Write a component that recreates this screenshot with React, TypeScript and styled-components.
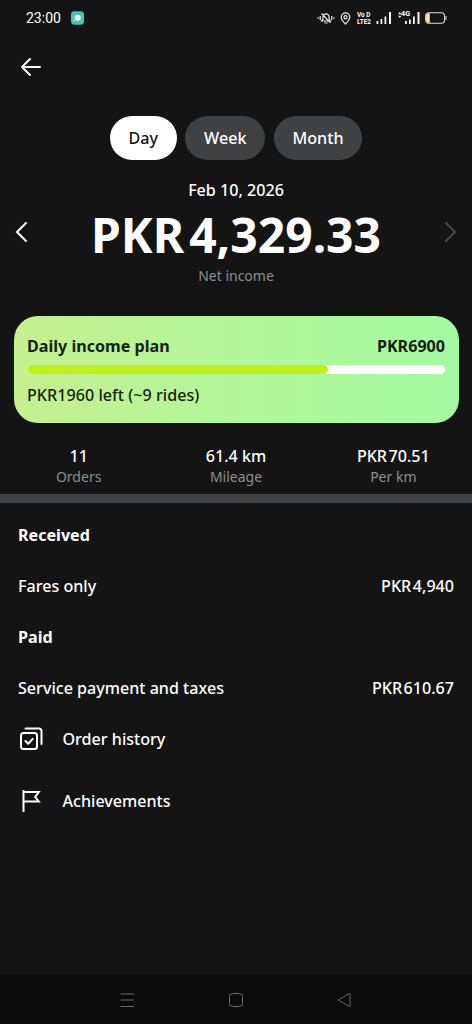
import React from "react";
import styled, { createGlobalStyle } from "styled-components";

const GlobalStyle = createGlobalStyle`
  * { box-sizing: border-box; }
  body { margin: 0; background: #141414; }
  svg { display: block; flex: none; }
`;

const Screen = styled.div`
  width: 472px;
  height: 1024px;
  display: flex;
  flex-direction: column;
  overflow: hidden;
  background: #141414;
  color: #fff;
  font-family: "Noto Sans", sans-serif;
  font-size: 16.1px;
  font-weight: 500;
`;

const StatusBar = styled.header`
  height: 36px;
  flex: none;
  display: flex;
  align-items: center;
  justify-content: space-between;
  padding: 0 25px 0 26px;
`;

const StatusGroup = styled.div<{ $gap: number }>`
  display: flex;
  align-items: center;
  gap: ${(p) => p.$gap}px;
`;

const Clock = styled.span`
  width: 35px;
  font-family: Roboto, sans-serif;
  font-size: 14px;
  font-weight: 400;
  line-height: 18px;
  white-space: nowrap;
`;

const VoLte = styled.span`
  width: 14px;
  display: flex;
  flex-direction: column;
  font: 700 7.5px/7px "Roboto", sans-serif;
  white-space: nowrap;
  transform: scaleX(0.85);
  transform-origin: left;

  span {
    height: 7px;
    overflow: hidden;
    width: 18px;
  }
`;

const Signal = styled.span`
  display: flex;
  position: relative;
`;

const NetworkTag = styled.span`
  position: absolute;
  left: 3px;
  top: -2px;
  font: 700 8px/8px "Roboto", sans-serif;
  transform: scaleX(0.9);
  transform-origin: left;
`;

const TopBar = styled.div`
  height: 79.5px;
  flex: none;
  padding: 19px 0 0 19px;
`;

const Tabs = styled.nav`
  display: flex;
  justify-content: center;
  gap: 8.5px;
`;

const Tab = styled.button<{ $active?: boolean; $width: number }>`
  width: ${(p) => p.$width}px;
  height: 44.5px;
  padding: 0;
  border: 0;
  border-radius: 23px;
  background: ${(p) => (p.$active ? "#fff" : "#404143")};
  color: ${(p) => (p.$active ? "#141414" : "#fff")};
  font: inherit;
  line-height: 45px;
`;

const Summary = styled.section`
  height: 156.3px;
  flex: none;
  display: flex;
  justify-content: space-between;
  padding: 18px 14px 0;
`;

const Step = styled.button`
  width: 16px;
  height: 24px;
  margin-top: 42px;
  padding: 0;
  border: 0;
  background: none;
  color: inherit;
`;

const SummaryText = styled.div`
  display: flex;
  flex-direction: column;
  align-items: center;
`;

const DateLabel = styled.div`
  line-height: 24px;
`;

const Total = styled.div`
  height: 64px;
  font-size: 48px;
  font-weight: 700;
  line-height: 66px;
  white-space: nowrap;
`;

const Currency = styled.span<{ $gap?: number }>`
  margin-right: ${(p) => p.$gap ?? 1.5}px;
`;

const Caption = styled.div`
  color: #8e8f91;
  font-size: 14px;
  font-weight: 400;
  line-height: 20px;
`;

const Plan = styled.section`
  height: 106.7px;
  flex: none;
  margin: 0 13.5px;
  padding: 17.7px 13.5px 0;
  border-radius: 24px;
  background: linear-gradient(90deg, #c5f08f, #b2f69a 50%, #a4faa1);
  color: #141f10;
`;

const PlanHead = styled.div`
  display: flex;
  justify-content: space-between;
  font-weight: 700;
  line-height: 25px;
`;

const Track = styled.div`
  height: 9px;
  margin-top: 6.3px;
  border-radius: 5px;
  background: #fff;
  overflow: hidden;
`;

const Fill = styled.div`
  height: 100%;
  border-radius: 5px;
  background: #c1f11d;
`;

const PlanNote = styled.div`
  margin-top: 8.7px;
  line-height: 25px;
  letter-spacing: 0.03px;
`;

const Stats = styled.section`
  height: 71px;
  flex: none;
  display: grid;
  grid-template-columns: repeat(3, 1fr);
  padding-top: 22px;
  text-align: center;
`;

const StatValue = styled.div`
  height: 22px;
  line-height: 23px;
`;

const Divider = styled.hr`
  width: 100%;
  height: 9px;
  flex: none;
  margin: 0 0 6.5px;
  border: 0;
  background: #404143;
`;

const Row = styled.div<{ $bold?: boolean }>`
  height: 51px;
  flex: none;
  display: flex;
  align-items: center;
  justify-content: space-between;
  padding: 0 18px;
  font-weight: ${(p) => (p.$bold ? 700 : 500)};
`;

const Links = styled.nav`
  display: flex;
  flex-direction: column;
  gap: 11px;
`;

const Link = styled.a`
  height: 51px;
  flex: none;
  display: flex;
  align-items: center;
  gap: 18.5px;
  padding-left: 18px;
`;

const Spacer = styled.div`
  flex: 1;
`;

const NavBar = styled.footer`
  height: 49px;
  flex: none;
  display: flex;
  justify-content: space-between;
  align-items: center;
  padding: 0 120px 0 119px;
  background: #0b0b0b;
`;

const SignalBars = () => (
  <svg width="16" height="12" viewBox="0 0 16 12" fill="#f4f4f4">
    <rect x="0.5" y="9" width="1.8" height="3" />
    <rect x="4.5" y="7" width="1.8" height="5" />
    <rect x="8.5" y="4.5" width="1.8" height="7.5" />
    <rect x="13" y="0" width="2" height="12" />
  </svg>
);

const Chevron = ({ flip, color }: { flip?: boolean; color: string }) => (
  <svg width="16" height="24" viewBox="0 0 16 24" fill="none" stroke={color} strokeWidth="2" strokeLinecap="round">
    <path d={flip ? "M4 3l9 9-9 9" : "M12 3L3 12l9 9"} />
  </svg>
);

const stats = [
  { value: "11", label: "Orders" },
  { value: "61.4 km", label: "Mileage" },
  { value: <><Currency>PKR</Currency>70.51</>, label: "Per km" },
];

export default function App() {
  return (
    <Screen>
      <GlobalStyle />
      <StatusBar>
        <StatusGroup $gap={10}>
          <Clock>23:00</Clock>
          <svg width="13" height="14" viewBox="0 0 13 14">
            <rect width="13" height="13.5" y=".2" rx="3.4" fill="#45c5b5" />
            <circle cx="6.7" cy="6.7" r="3" fill="#fff" />
            <circle cx="6.7" cy="6.7" r=".8" fill="#9de0d9" />
            <circle cx="3.1" cy="9.6" r=".7" fill="#fff" />
          </svg>
        </StatusGroup>
        <StatusGroup $gap={5.5}>
          <svg width="18" height="14" viewBox="0 0 18 14" fill="none" stroke="#eee" strokeWidth="1.2">
            <path d="M4.5 10h9L12 8V5.8a3 3 0 0 0-6 0V8zM7.5 12h3M4.6 2.5l8.8 9.3M3.2 5v4M14.8 5v4M1 6.2v1.6M17 6.2v1.6" />
          </svg>
          <svg width="11" height="13" viewBox="0 0 11 13" fill="none" stroke="#eee" strokeWidth="1.2">
            <path d="M5.5 12C3 9.5 1.2 7.5 1.2 5.2a4.3 4.3 0 0 1 8.6 0c0 2.3-1.8 4.3-4.3 6.8z" />
            <circle cx="5.5" cy="5.2" r="1.6" />
          </svg>
          <VoLte><span>Vo D</span><span>LTE2</span></VoLte>
          <SignalBars />
          <Signal>
            <svg width="22" height="12" viewBox="0 0 22 12" fill="#f4f4f4">
              <path d="M0 2.3L1.8 0l1.8 2.3zM0 3.8l1.8 2.3 1.8-2.3z" />
              <rect x="7" y="9" width="1.8" height="3" />
              <rect x="11" y="7.5" width="1.8" height="4.5" />
              <rect x="15" y="4.5" width="1.8" height="7.5" />
              <rect x="19.5" y="0" width="2" height="12" />
            </svg>
            <NetworkTag>4G</NetworkTag>
          </Signal>
          <svg width="22" height="12" viewBox="0 0 22 12">
            <rect x=".6" y=".7" width="19" height="10.6" rx="3.5" fill="none" stroke="#ddd" strokeWidth="1.1" />
            <path d="M3.4 1.2h1.4v9.6H3.4a2.3 2.3 0 0 1-2.3-2.3v-5a2.3 2.3 0 0 1 2.3-2.3z" fill="#ffe0a0" />
            <path d="M21 4v4" stroke="#ddd" />
          </svg>
        </StatusGroup>
      </StatusBar>

      <TopBar>
        <svg width="24" height="24" viewBox="0 0 24 24" fill="none" stroke="#fff" strokeWidth="2" strokeLinecap="round" strokeLinejoin="round">
          <path d="M21 12H3M11 4L3 12l8 8" />
        </svg>
      </TopBar>

      <Tabs>
        <Tab $active $width={67}>Day</Tab>
        <Tab $width={80}>Week</Tab>
        <Tab $width={88.5}>Month</Tab>
      </Tabs>

      <Summary>
        <Step aria-label="Previous"><Chevron color="#fff" /></Step>
        <SummaryText>
          <DateLabel>Feb 10, 2026</DateLabel>
          <Total><Currency $gap={5}>PKR</Currency>4,329.33</Total>
          <Caption>Net income</Caption>
        </SummaryText>
        <Step aria-label="Next"><Chevron flip color="#444547" /></Step>
      </Summary>

      <Plan>
        <PlanHead><span>Daily income plan</span><span>PKR6900</span></PlanHead>
        <Track><Fill style={{ width: "72%" }} /></Track>
        <PlanNote>PKR1960 left (~9 rides)</PlanNote>
      </Plan>

      <Stats>
        {stats.map((s) => (
          <div key={s.label}>
            <StatValue>{s.value}</StatValue>
            <Caption>{s.label}</Caption>
          </div>
        ))}
      </Stats>
      <Divider />

      <Row $bold>Received</Row>
      <Row><span>Fares only</span><span><Currency>PKR</Currency>4,940</span></Row>
      <Row $bold>Paid</Row>
      <Row><span>Service payment and taxes</span><span><Currency>PKR</Currency>610.67</span></Row>

      <Links>
        <Link>
          <svg width="26" height="26" viewBox="0 0 26 26" fill="none" stroke="#fff" strokeWidth="2" strokeLinecap="round" strokeLinejoin="round">
            <rect x="3" y="7" width="16" height="16" rx="2.5" />
            <path d="M7.5 2.5H21a2.5 2.5 0 0 1 2.5 2.5v13M7.5 15l2.7 2.7 4.5-4.8" />
          </svg>
          <span>Order history</span>
        </Link>
        <Link>
          <svg width="26" height="26" viewBox="0 0 26 26" fill="none" stroke="#fff" strokeWidth="2">
            <path d="M5.5 2v22M5.5 4h15.3l-3.6 5 3.6 4.5H5.5" />
          </svg>
          <span>Achievements</span>
        </Link>
      </Links>

      <Spacer />
      <NavBar>
        <svg width="16" height="16" viewBox="0 0 16 16" stroke="#6a6a6a">
          <path d="M1.5 2H15M1.5 8H15M1.5 14.5H15" />
        </svg>
        <svg width="16" height="16" viewBox="0 0 16 16" fill="none" stroke="#6a6a6a">
          <rect x="1.5" y="1.5" width="13" height="13" rx="3" />
        </svg>
        <svg width="16" height="16" viewBox="0 0 16 16" fill="none" stroke="#6a6a6a" strokeLinejoin="round">
          <path d="M2 8l11-6.3q1-.4 1 .8v11q0 1.2-1 .8z" />
        </svg>
      </NavBar>
    </Screen>
  );
}
